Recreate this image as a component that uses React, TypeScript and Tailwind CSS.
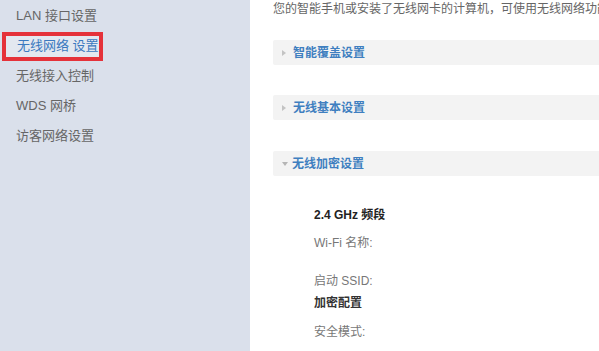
import React from "react";

const font = { fontFamily: '"Liberation Sans", "Noto Sans CJK SC", sans-serif' };

function Section({ title, open }: { title: string; open?: boolean }) {
  return (
    <div className="h-[25px] bg-[#f3f3f3] flex items-center pl-[9px] rounded-l-[2px]">
      {open ? (
        <span className="w-0 h-0 border-l-[3.5px] border-r-[3.5px] border-t-[4px] border-l-transparent border-r-transparent border-t-[#b5b5b5] mr-[4px]" />
      ) : (
        <span className="w-0 h-0 border-t-[3.5px] border-b-[3.5px] border-l-[4px] border-t-transparent border-b-transparent border-l-[#c3c3c3] mr-[7px]" />
      )}
      <span className="text-[12px] font-bold text-[#3f7fc0]">{title}</span>
    </div>
  );
}

export default function App() {
  const items = ["LAN 接口设置", "无线网络 设置", "无线接入控制", "WDS 网桥", "访客网络设置"];
  return (
    <div className="flex w-[599px] h-[351px] overflow-hidden bg-white" style={font}>
      <aside className="w-[250px] shrink-0 bg-[#dae0eb] pt-[1px]">
        {items.map((t, i) =>
          i === 1 ? (
            <div key={t} className="h-[30px] flex items-center">
              <div className="ml-[2px] h-[29px] w-[101px] border-[4px] border-[#e5323a] bg-[#e3e8f0] flex items-center pl-[11px]">
                <span className="text-[13px] text-[#3b79bf]">{t}</span>
              </div>
            </div>
          ) : (
            <div key={t} className="h-[30px] flex items-center pl-[16px] text-[13px] text-[#666]">
              {t}
            </div>
          )
        )}
      </aside>
      <main className="flex-1 min-w-0 pl-[23px] flex flex-col">
        <p className="text-[12px] leading-[18px] text-[#666] whitespace-nowrap">
          您的智能手机或安装了无线网卡的计算机，可使用无线网络功能
        </p>
        <div className="mt-[22px]">
          <Section title="智能覆盖设置" />
        </div>
        <div className="mt-[30px]">
          <Section title="无线基本设置" />
        </div>
        <div className="mt-[31px]">
          <Section title="无线加密设置" open />
        </div>
        <div className="pl-[41px] text-[12px] leading-[18px]">
          <div className="mt-[30px] font-bold text-[#222]">2.4 GHz 频段</div>
          <div className="mt-[10px] text-[#777]">Wi-Fi 名称:</div>
          <div className="mt-[20px] text-[#777]">启动 SSID:</div>
          <div className="mt-[4px] font-bold text-[#333]">加密配置</div>
          <div className="mt-[11px] text-[#777]">安全模式:</div>
        </div>
      </main>
    </div>
  );
}
